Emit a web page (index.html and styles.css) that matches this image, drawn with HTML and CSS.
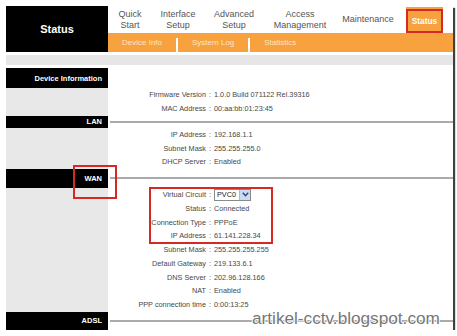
FILE: index.html
```html
<!DOCTYPE html>
<html lang="en">
<head>
    <meta charset="UTF-8">
    <title>Status</title>
    <link rel="stylesheet" href="styles.css">
</head>
<body>
    <div class="shot">
        <div class="top">
            <div class="brand">Status</div>
            <div class="menus">
                <div class="nav">
                    <div class="nav-item">Quick<br>Start</div>
                    <div class="nav-item">Interface<br>Setup</div>
                    <div class="nav-item">Advanced<br>Setup</div>
                    <div class="nav-item">Access<br>Management</div>
                    <div class="nav-item">Maintenance</div>
                    <div class="nav-item nav-current"><span class="nav-mark">Status</span></div>
                </div>
                <div class="subnav">
                    <span class="sub-item">Device Info</span>
                    <span class="sub-sep"></span>
                    <span class="sub-item">System Log</span>
                    <span class="sub-sep"></span>
                    <span class="sub-item">Statistics</span>
                </div>
            </div>
        </div>

        <div class="band"></div>

        <div class="sec-head head-device">
            <div class="sec-title">Device Information</div>
        </div>
        <div class="sec-body">
            <div class="side"></div>
            <div class="rows">
                <div class="row"><span class="k">Firmware Version</span><span class="c">:</span><span>1.0.0 Build 071122 Rel.39316</span></div>
                <div class="row"><span class="k">MAC Address</span><span class="c">:</span><span>00:aa:bb:01:23:45</span></div>
            </div>
        </div>

        <div class="sec-head head-lan">
            <div class="sec-title">LAN</div>
            <div class="sec-rule"></div>
        </div>
        <div class="sec-body">
            <div class="side"></div>
            <div class="rows">
                <div class="row"><span class="k">IP Address</span><span class="c">:</span><span>192.168.1.1</span></div>
                <div class="row"><span class="k">Subnet Mask</span><span class="c">:</span><span>255.255.255.0</span></div>
                <div class="row"><span class="k">DHCP Server</span><span class="c">:</span><span>Enabled</span></div>
            </div>
        </div>

        <div class="sec-head head-wan">
            <div class="sec-title marked">WAN</div>
            <div class="sec-rule"></div>
        </div>
        <div class="sec-body">
            <div class="side"></div>
            <div class="rows">
                <div class="hl">
                    <div class="row">
                        <span class="k">Virtual Circuit</span><span class="c">:</span>
                        <span class="select"><span class="select-text">PVC0</span><span class="select-btn"><svg width="7" height="5" viewBox="0 0 7 5"><path d="M0.8 0.8 L3.5 3.8 L6.2 0.8" fill="none" stroke="#27467f" stroke-width="1.4"/></svg></span></span>
                    </div>
                    <div class="row"><span class="k">Status</span><span class="c">:</span><span>Connected</span></div>
                    <div class="row"><span class="k">Connection Type</span><span class="c">:</span><span>PPPoE</span></div>
                    <div class="row"><span class="k">IP Address</span><span class="c">:</span><span>61.141.228.34</span></div>
                </div>
                <div class="row"><span class="k">Subnet Mask</span><span class="c">:</span><span>255.255.255.255</span></div>
                <div class="row"><span class="k">Default Gateway</span><span class="c">:</span><span>219.133.6.1</span></div>
                <div class="row"><span class="k">DNS Server</span><span class="c">:</span><span>202.96.128.166</span></div>
                <div class="row"><span class="k">NAT</span><span class="c">:</span><span>Enabled</span></div>
                <div class="row"><span class="k">PPP connection time</span><span class="c">:</span><span>0:00:13:25</span></div>
            </div>
        </div>

        <div class="sec-head head-adsl">
            <div class="sec-title">ADSL</div>
            <div class="sec-rule"></div>
        </div>

        <div class="watermark">artikel-cctv.blogspot.com</div>
    </div>
</body>
</html>
```

FILE: styles.css
```css
* {
    margin: 0;
    padding: 0;
    box-sizing: border-box;
}

body {
    background: #fff;
    font-family: "Liberation Sans", Arial, sans-serif;
}

.shot {
    position: relative;
    width: 447px;
    height: 324px;
    margin: 6px 0 0 6px;
    background: #fff;
    box-shadow: 2px 2px 1px rgba(0, 0, 0, 0.75);
}

/* header */
.top {
    display: flex;
    height: 46px;
}

.brand {
    width: 102px;
    background: #000;
    color: #fff;
    font-size: 11px;
    font-weight: bold;
    display: flex;
    align-items: center;
    justify-content: center;
}

.menus {
    flex: 1;
    display: flex;
    flex-direction: column;
}

.nav {
    height: 27px;
    display: grid;
    grid-template-columns: 44px 52px 60px 72px 64px 6px 37px;
}

.nav-item {
    font-size: 9px;
    line-height: 10.5px;
    color: #555;
    text-align: center;
    display: flex;
    align-items: center;
    justify-content: center;
}

.nav-current {
    grid-column: 7;
    margin-top: 1px;
    padding-top: 2px;
    background: #f7a23e;
    align-items: stretch;
}

.nav-mark {
    flex: 1;
    border: 2px solid #d42a24;
    color: #fff;
    font-size: 8.3px;
    font-weight: bold;
    display: flex;
    align-items: center;
    justify-content: center;
}

.subnav {
    height: 19px;
    background: #f7a23e;
    display: flex;
}

.sub-item {
    padding: 0 14px;
    font-size: 8px;
    color: #fde5c6;
    display: flex;
    align-items: center;
}

.sub-sep {
    width: 2px;
    margin-top: 5px;
    background: #fff;
}

.band {
    height: 10px;
    margin: 3px 0;
    background: #e6e6e6;
}

/* sections */
.sec-head {
    display: flex;
}

.head-device { height: 20px; }
.head-lan { height: 12px; }
.head-wan { height: 19px; }
.head-adsl { height: 18.5px; }

.sec-title {
    position: relative;
    width: 102px;
    padding-right: 6px;
    background: #000;
    color: #fff;
    font-size: 7.5px;
    font-weight: bold;
    display: flex;
    align-items: center;
    justify-content: flex-end;
}

.sec-title.marked::after {
    content: "";
    position: absolute;
    top: -4px;
    right: -9px;
    width: 40px;
    height: 30px;
    border: 2px solid #d42a24;
}

.sec-rule {
    flex: 1;
    align-self: center;
    height: 2px;
    margin-left: 2px;
    background: #aaa;
}

.sec-body {
    display: flex;
}

.side {
    width: 102px;
    background: #e8e8e8;
}

.rows {
    flex: 1;
    color: #484848;
    font-size: 7.3px;
}

.row {
    height: 13.75px;
    display: grid;
    grid-template-columns: 98px 8px auto;
    align-items: center;
    white-space: nowrap;
}

.row .k {
    text-align: right;
}

.row .c {
    text-align: center;
}

.hl {
    width: 122px;
    margin-left: 42px;
    outline: 2px solid #d42a24;
    outline-offset: -1px;
}

.hl .row {
    grid-template-columns: 56px 8px auto;
}

.select {
    display: inline-flex;
    align-items: stretch;
    width: 37px;
    height: 12px;
    border: 1px solid #8a8a8a;
    background: #fff;
}

.select-text {
    flex: 1;
    padding-left: 2px;
    color: #222;
    display: flex;
    align-items: center;
}

.select-btn {
    width: 11px;
    background: #c8dbf2;
    border-left: 1px solid #a5bbd8;
    display: flex;
    align-items: center;
    justify-content: center;
}

.watermark {
    position: absolute;
    left: 246px;
    top: 303px;
    font-size: 17.2px;
    line-height: 18px;
    color: #777;
    text-shadow: 1px 0 #fff, -1px 0 #fff, 0 1px #fff, 0 -1px #fff;
    white-space: nowrap;
}
```
